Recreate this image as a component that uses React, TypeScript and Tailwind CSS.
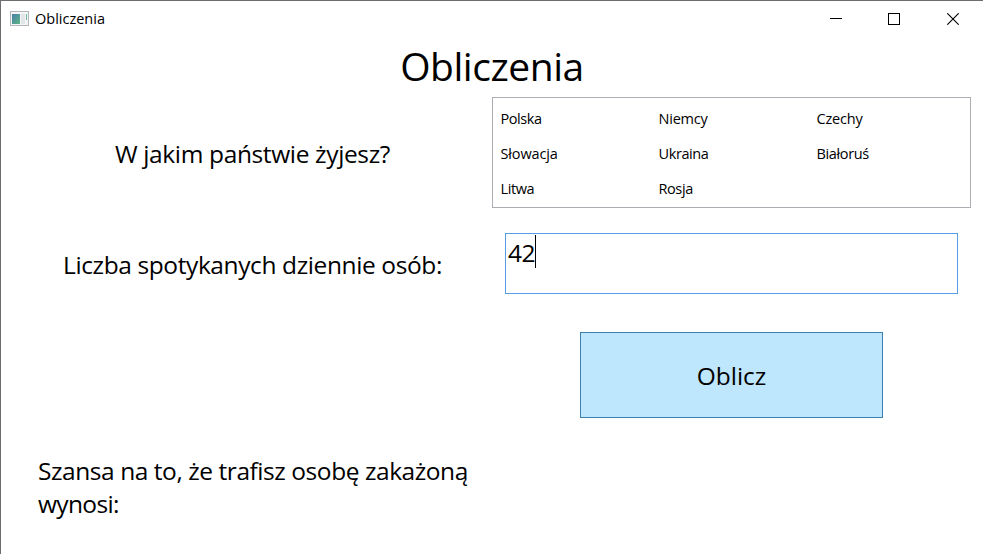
import React from "react";

const countries = [
  { name: "Polska", spacing: "tracking-[-0.45px]" },
  { name: "Niemcy", spacing: "tracking-[-0.2px]" },
  { name: "Czechy", spacing: "tracking-[-0.2px]" },
  { name: "Słowacja", spacing: "tracking-[-0.15px]" },
  { name: "Ukraina", spacing: "tracking-[-0.4px]" },
  { name: "Białoruś", spacing: "tracking-[-0.35px]" },
  { name: "Litwa", spacing: "tracking-[-0.4px]" },
  { name: "Rosja", spacing: "tracking-[-0.4px]" },
];

function AppIcon() {
  return (
    <svg width="19" height="15" viewBox="0 0 19 15" shapeRendering="crispEdges">
      <defs>
        <linearGradient id="pane" x1="0" y1="0" x2="1" y2="1">
          <stop offset="0" stopColor="#4a7fa8" />
          <stop offset="1" stopColor="#5fb585" />
        </linearGradient>
      </defs>
      <rect x="0.5" y="0.5" width="18" height="14" fill="#f4f5f6" stroke="#b3b6ba" />
      <rect x="2" y="3" width="8" height="10" fill="url(#pane)" />
      <rect x="11" y="3" width="4" height="10" fill="#e3e6e8" />
      <rect x="16" y="3" width="1" height="6" fill="#6fb59a" />
    </svg>
  );
}

function TitleBar() {
  return (
    <header className="flex h-[37px] items-center pb-[2px] pl-[9px]">
      <AppIcon />
      <span className="ml-[6px] whitespace-nowrap text-[14.5px] leading-5 tracking-[0px]">Obliczenia</span>
      <div className="ml-auto flex h-full">
        <button aria-label="Minimize" className="flex w-[58px] items-center justify-center">
          <svg width="12" height="12" shapeRendering="crispEdges"><path d="M0 5.5H12" stroke="#000" /></svg>
        </button>
        <button aria-label="Maximize" className="flex w-[58px] items-center justify-center">
          <svg width="12" height="12" shapeRendering="crispEdges"><rect x="0.5" y="0.5" width="11" height="11" fill="none" stroke="#000" /></svg>
        </button>
        <button aria-label="Close" className="flex w-[60px] items-center justify-center">
          <svg width="12" height="12"><path d="M0.3 0.3L11.7 11.7M11.7 0.3L0.3 11.7" stroke="#000" strokeWidth="1.1" /></svg>
        </button>
      </div>
    </header>
  );
}

export default function App() {
  return (
    <div className="h-[554px] w-[983px] overflow-hidden border-l border-t border-[#6b6d70] bg-white font-['Open_Sans','Noto_Sans',sans-serif] text-black">
      <TitleBar />
      <h1 className="flex h-[58px] justify-center whitespace-nowrap pt-[1px] text-[39px] leading-[54px]">
        <span className="tracking-[-0.45px]">Obliczenia</span>
      </h1>
      <main className="grid grid-cols-[490px_492px] text-[24.5px] leading-[33px]">
        <div className="h-[111px] whitespace-nowrap pl-[114px] pt-[41px]">
          <span className="tracking-[-0.36px]">W jakim państwie żyjesz?</span>
        </div>
        <div className="ml-[1px] mt-px grid h-[111px] w-[479px] auto-rows-[35px] grid-cols-[158px_158px_158px] border border-[#abadb3] pl-[7.5px] pt-[3px] text-[14.5px] leading-[35px]">
          {countries.map(({ name, spacing }) => (
            <span key={name} className={spacing}>{name}</span>
          ))}
        </div>
        <div className="h-[124px] whitespace-nowrap pl-[62px] pt-[40px]">
          <span className="tracking-[-0.39px]">Liczba spotykanych dziennie osób:</span>
        </div>
        <div className="pl-[14px] pt-[25px]">
          <div className="flex h-[61px] w-[453px] border border-[#569de5] pl-[2px] pt-px">
            <span className="pt-px tracking-[-0.6px]">42</span>
            <span className="h-[33px] w-px bg-black" />
          </div>
        </div>
        <div />
        <div className="pl-[89px]">
          <button className="flex h-[86px] w-[303px] items-center justify-center border border-[#3c7fb1] bg-[#bee6fd]">
            <span className="tracking-[0px]">Oblicz</span>
          </button>
        </div>
      </main>
      <p className="mt-[36px] whitespace-nowrap pl-[37px] text-[24.5px] leading-[33px]">
        <span className="tracking-[-0.44px]">Szansa na to, że trafisz osobę zakażoną</span>
        <br />
        <span className="tracking-[-0.65px]">wynosi:</span>
      </p>
    </div>
  );
}
